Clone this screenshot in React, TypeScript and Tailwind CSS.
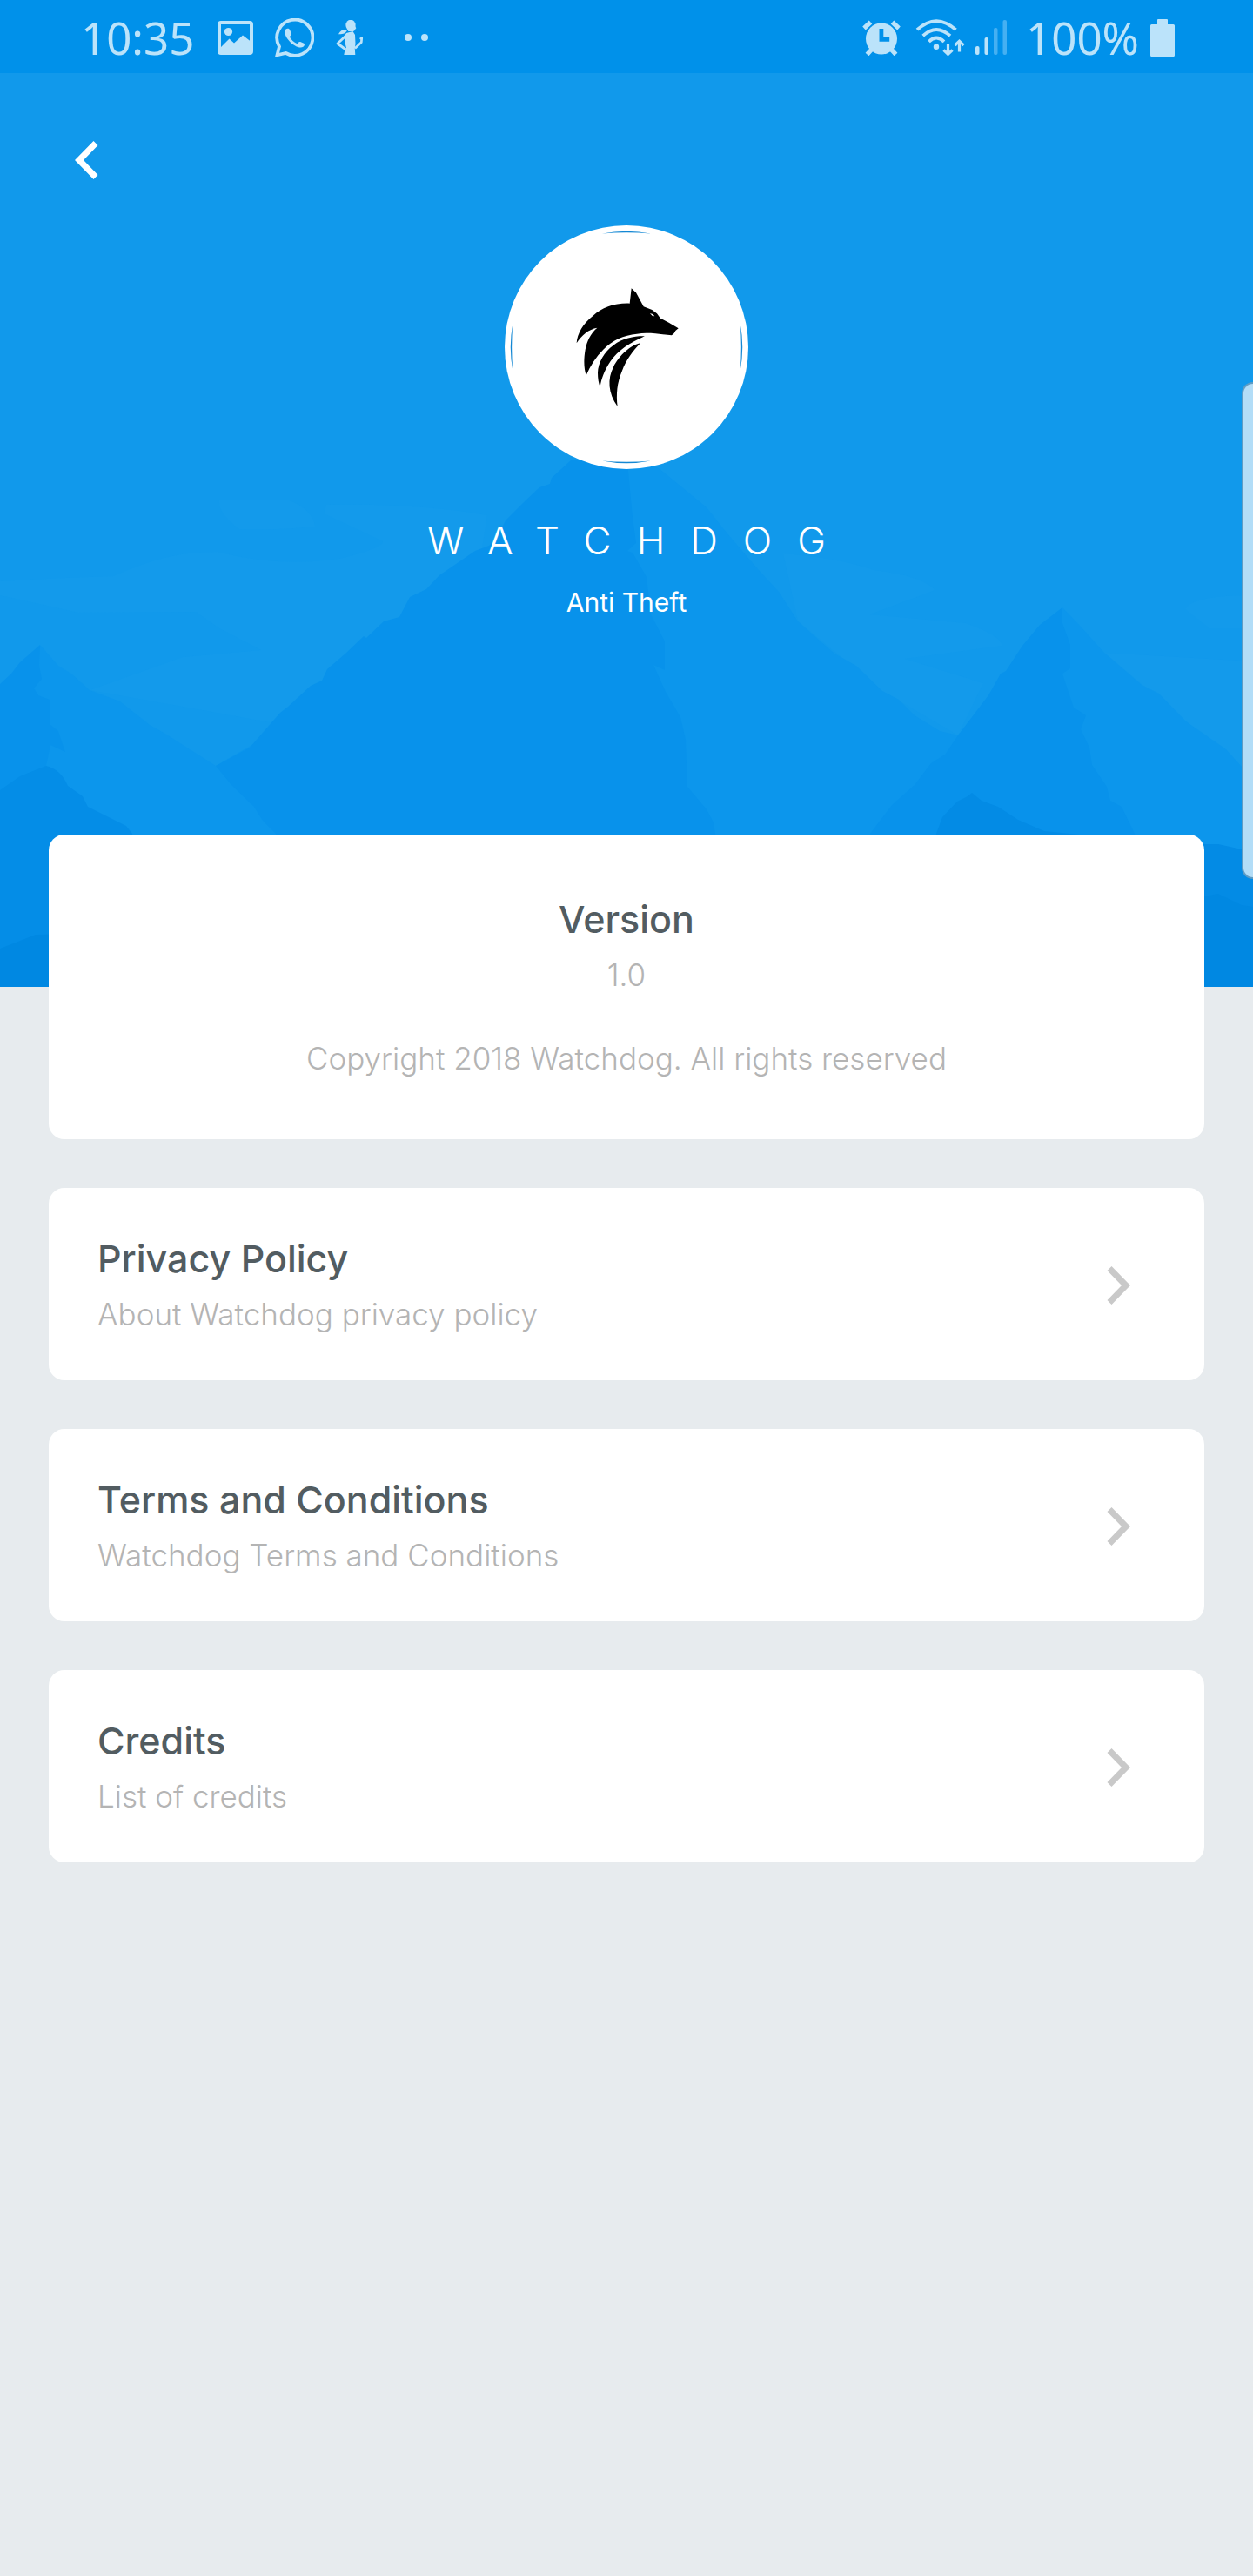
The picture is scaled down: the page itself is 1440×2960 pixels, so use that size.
import React from "react";

const links = [
  { title: "Privacy Policy", text: "About Watchdog privacy policy", href: "#privacy" },
  { title: "Terms and Conditions", text: "Watchdog Terms and Conditions", href: "#terms" },
  { title: "Credits", text: "List of credits", href: "#credits" },
];

function PictureIcon() {
  return (
    <svg className="h-[39px] w-[41px]" viewBox="0 0 41 39" fill="currentColor" aria-hidden="true">
      <rect x="2" y="2" width="37" height="35" rx="2" fill="none" stroke="currentColor" strokeWidth="4" />
      <circle cx="12.5" cy="12.5" r="4.6" />
      <path d="M3 31L13.5 20.5L19 25.5L29 16.5L38 23.500V37H3Z" />
    </svg>
  );
}

function WhatsAppIcon() {
  return (
    <svg className="h-[45px] w-[45px]" viewBox="0 0 45 45" fill="currentColor" aria-hidden="true">
      <path
        d="M2.500 42.300L5 32.500A20.600 20.600 0 1 1 12.500 40Z"
        fill="none"
        stroke="currentColor"
        strokeWidth="3.800"
      />
      <path d="M12.500 12.600C14 11 16.600 11.500 17.200 13.400L18.700 17.200C19.200 18.800 18 19.800 16.800 21.200C18.800 25 21.700 27.500 25.500 29.200C26.700 28 27.500 26.500 29.200 27L33.200 28.800C35 29.800 33.500 32 32.300 32.800C28.500 35 21.500 31.500 17 26.700C12.500 22 9.500 16 12.500 12.600Z" />
    </svg>
  );
}

function FitnessIcon() {
  return (
    <svg className="h-10 w-8" viewBox="0 0 32 40" fill="currentColor" aria-hidden="true">
      <ellipse cx="17" cy="6" rx="5.600" ry="6.200" />
      <path d="M15 9H21.500L20.500 13H14Z" />
      <path d="M20.500 4L23.300 9.300L21 12.500L18 11Z" />
      <path d="M3 16.300C5 12 9 10.200 13 11.200C12 15 8 16.500 3 16.300Z" />
      <path d="M12 15L19.500 13L22 17L22.500 27L21.800 33L22.300 40H9.300L10 36.500L12 32L10.500 26L10 18Z" />
      <path d="M11.500 18L2 27L11.500 34" fill="none" stroke="currentColor" strokeWidth="2.800" strokeLinejoin="round" />
      <path d="M22 32.500L29.300 25.500L29.800 20.500L27.800 22" fill="none" stroke="currentColor" strokeWidth="2.600" strokeLinejoin="round" />
    </svg>
  );
}

function AlarmIcon() {
  return (
    <svg className="h-[41px] w-11" viewBox="0 0 44 41" fill="currentColor" aria-hidden="true">
      <g stroke="currentColor" strokeWidth="5.200">
        <path d="M2 9.500L9.500 2.500M34.500 2.500L42 9.500" />
        <path d="M5.500 39.500L11 33.500M38.500 39.500L33 33.500" />
      </g>
      <circle cx="22" cy="21.500" r="18" />
      <path d="M19.500 10H24.300V20H31.200V24.800H19.500Z" fill="#0091ea" />
    </svg>
  );
}

function WifiIcon() {
  return (
    <svg className="h-11 w-[58px]" viewBox="0 0 58 44" fill="none" stroke="currentColor" aria-hidden="true">
      <g strokeWidth="3.800">
        <path d="M2 13.200Q24 -6.800 46.500 13.200" />
        <path d="M8.700 20.200Q24 5.800 40 20.200" />
        <path d="M15.500 26.800Q24 18.400 33 26.800" />
      </g>
      <circle cx="24" cy="32.800" r="3.200" fill="currentColor" stroke="none" />
      <g strokeWidth="3.200">
        <path d="M37.500 29V41M32.500 36.500L37.500 41.200L42.500 36.500" />
        <path d="M50.500 38.500V27M45.500 31L50.500 26.200L55.500 31" />
      </g>
    </svg>
  );
}

function SignalIcon() {
  return (
    <svg className="h-10 w-9" viewBox="0 0 36 40" fill="currentColor" aria-hidden="true">
      <rect x="0" y="30" width="4.500" height="10" rx="2" />
      <rect x="10.500" y="20" width="4.500" height="20" rx="2" />
      <rect x="21" y="9" width="4.500" height="31" rx="2" fill="#45b0f2" />
      <rect x="31.500" y="0" width="4.500" height="40" rx="2" fill="#45b0f2" />
    </svg>
  );
}

function BatteryIcon() {
  return (
    <svg className="h-[43px] w-7" viewBox="0 0 28 43" fill="currentColor" aria-hidden="true">
      <path d="M8 1Q8 0 9 0H19Q20 0 20 1V6H26.500Q28 6 28 7.500V41.500Q28 43 26.500 43H1.500Q0 43 0 41.500V7.500Q0 6 1.500 6H8Z" />
    </svg>
  );
}

function WatchdogLogo() {
  return (
    <svg className="h-[280px] w-[280px]" viewBox="0 0 280 280" role="img" aria-label="Watchdog logo">
      <circle cx="140" cy="140" r="140" fill="#fff" />
      <g fill="#1488d4">
        <path d="M112 9.500Q140 4 168 9.500Q140 6.800 112 9.500Z" />
        <path d="M112 9.500Q140 4 168 9.500Q140 6.800 112 9.500Z" transform="rotate(90 140 140)" />
        <path d="M112 9.500Q140 4 168 9.500Q140 6.800 112 9.500Z" transform="rotate(180 140 140)" />
        <path d="M112 9.500Q140 4 168 9.500Q140 6.800 112 9.500Z" transform="rotate(270 140 140)" />
      </g>
      <g transform="translate(60 61) scale(0.3333)" fill="#000">
        <path d="M257 34L273 49L299 97L328 108L345 121L357 137L386 152L409 166L419 172L409 180L404 189L396 196L340 190C315 188 295 188 276 191C230 195 190 214 160 245C135 270 115 300 101 334C93 310 92 280 98 245C104 215 116 190 139 170C110 175 85 195 68 223C70 190 90 155 125 128C155 100 200 84 251 86Z" />
        <path d="M303 199C270 198 230 204 195 230C163 253 142 290 141 325C141 345 144 362 149 374C153 345 165 315 185 285C212 248 250 222 303 199Z" />
        <path d="M288 223C255 229 215 265 195 305C174 345 176 395 209 441C204 400 207 360 225 318C238 282 262 250 288 223Z" />
        <path d="M321 121Q331 120 337 130Q327 130 321 121Z" fill="#fff" />
      </g>
    </svg>
  );
}

function Mountains() {
  return (
    <svg
      className="absolute inset-0 h-full w-full"
      viewBox="0 0 1440 1134"
      preserveAspectRatio="xMidYMax slice"
      aria-hidden="true"
    >
      <g fill="#139aeb">
        <path d="M0 668Q60 664 130 662C170 645 200 634 250 634Q320 652 390 642Q440 630 440 622L372 590L375 580Q480 578 560 592L540 720L310 830L103 793L210 755L300 747L252 722L225 703L90 704L0 684Z" />
        <path d="M252 574H330Q360 585 362 605Q310 610 275 608Q250 590 252 574Z" />
        <path d="M900 636Q960 640 1005 655Q1060 662 1075 678L1000 706L1110 716Q1150 730 1152 742L1040 757L1130 785L1101 845L1014 794L917 714Z" />
        <path d="M1269 750L1440 760V892L1363 829Z" />
        <path d="M1362 700Q1370 684 1440 684V722H1390Z" />
      </g>
      <path
        fill="#0c96ec"
        d="M46 741L67 765L82 774L103 793L138 806L172 833L190 843L218 861L248 880L300 850L722 525L757 538L812 583L835 612L871 654L895 680L917 714L959 751L984 765L1014 794L1033 804L1051 822L1080 840L1101 845L1221 698L1243 721L1269 750L1312 787L1332 797L1363 829L1409 861L1427 881L1440 892V1134H0V900Z"
      />
      <path
        fill="#0892eb"
        d="M722 525L656 529L634 549L632 556L620 560L601 578L581 598L570 620L562 627L546 633L505 661L490 677L471 686L459 709L441 714L421 733L418 731L397 751L376 769L370 782L357 788L331 812L322 819L287 859L248 880L266 902L292 927L302 943L317 958V1134H850L822 958L820 945L812 930L790 904L788 850L782 824L765 795L751 764L764 770V737L748 706L743 663L727 635L721 633L731 624L727 594L722 542Z"
      />
      <path
        fill="#0892eb"
        d="M1221 698L1195 718L1175 742L1156 771L1150 774L1136 799L1101 845L1086 867L1070 877L1051 902L1025 925L1000 958V1134H1330L1304 958L1289 927L1276 920L1272 904L1255 879L1252 859L1242 838L1248 822L1234 813L1221 774L1230 768V741L1221 716Z"
      />
      <path fill="#0892eb" d="M46 741L23 761L13 774L0 786V910L53 880L58 856L75 864L67 840L58 833L57 804L44 799L39 791L48 780L45 765Z" />
      <path fill="#048de7" d="M0 908L23 892L53 880Q70 884 78 903L95 915L101 927L145 949L152 958L180 1134H0Z" />
      <path fill="#038be5" d="M1060 1134L1076 958L1083 939L1100 921L1112 915L1117 911L1128 920L1147 927L1170 942L1200 955L1300 965L1384 970L1400 970L1427 976L1440 978V1134Z" />
      <path fill="#0088e2" d="M0 1090L41 1074L200 1070V1134H0ZM1300 1050L1384 1030L1400 1027L1427 1040L1440 1042V1134H1300Z" />
    </svg>
  );
}

function StatusBar() {
  return (
    <div className="relative flex h-[84px] items-center justify-between bg-[#0091ea] pt-0.5 pr-[90px] pl-[93px] font-['Noto_Sans',sans-serif] text-[51px] leading-none text-[#bbe3fa]">
      <div className="flex items-center">
        <span>10:35</span>
        <div className="ml-[27px] flex items-center gap-[25px]">
          <PictureIcon />
          <WhatsAppIcon />
          <FitnessIcon />
        </div>
        <div className="ml-[47px] flex gap-[11px]">
          <span className="size-2 rounded-full bg-current" />
          <span className="size-2 rounded-full bg-current" />
        </div>
      </div>
      <div className="flex items-center">
        <AlarmIcon />
        <div className="ml-[17px] flex items-center gap-[11px]">
          <WifiIcon />
          <SignalIcon />
        </div>
        <span className="mr-[13px] ml-[22px]">100%</span>
        <BatteryIcon />
      </div>
    </div>
  );
}

export default function App() {
  return (
    <div className="relative min-h-screen overflow-hidden bg-[#e7ebee] font-[Inter,sans-serif]">
      <header className="relative bg-[#1199eb] pb-[422px]">
        <Mountains />
        <StatusBar />
        <div className="relative flex flex-col items-center text-white">
          <button type="button" aria-label="Back" className="mt-[58px] ml-[66px] self-start p-5">
            <svg className="h-11 w-[27px]" viewBox="0 0 27 44" fill="currentColor" aria-hidden="true">
              <path d="M0 22L21.500 0L26.500 5L10 22L26.500 39L21.500 44Z" />
            </svg>
          </button>
          <div className="mt-[33px]">
            <WatchdogLogo />
          </div>
          <h1 className="mt-[54px] pl-[29px] text-[44px] leading-[56px] font-light tracking-[29px]">WATCHDOG</h1>
          <p className="mt-[23px] text-[30px] leading-10">Anti Theft</p>
        </div>
      </header>

      <main className="relative -mt-[175px] flex flex-col gap-14 px-14 pb-14">
        <section className="rounded-[18px] bg-white px-14 pt-[71px] pb-[69px] text-center">
          <h2 className="text-[43px] leading-[52px] font-medium text-[#525c61]">Version</h2>
          <p className="mt-3.5 text-[35px] leading-[48px] font-light text-[#b4b4b4]">1.0</p>
          <p className="mt-12 text-[35px] leading-[48px] font-light text-[#b4b4b4]">
            Copyright 2018 Watchdog. All rights reserved
          </p>
        </section>
        {links.map((link) => (
          <a
            key={link.href}
            href={link.href}
            className="flex items-center justify-between rounded-[18px] bg-white pt-[55px] pr-[85px] pb-[52px] pl-14"
          >
            <div>
              <h2 className="text-[43px] leading-[52px] font-medium text-[#525c61]">{link.title}</h2>
              <p className="mt-3.5 text-[35px] leading-[48px] font-light text-[#b4b4b4]">{link.text}</p>
            </div>
            <svg className="h-11 w-[27px] text-[#c9c9c9]" viewBox="0 0 27 44" fill="currentColor" aria-hidden="true">
              <path d="M27 22L5.500 0L0.500 5L17 22L0.500 39L5.500 44Z" />
            </svg>
          </a>
        ))}
      </main>

      <div className="absolute top-[439px] right-0 h-[571px] w-[13px] rounded-l-[13px] border-2 border-r-0 border-[#5f9cc4] bg-[#b3ddf7]" />
    </div>
  );
}
